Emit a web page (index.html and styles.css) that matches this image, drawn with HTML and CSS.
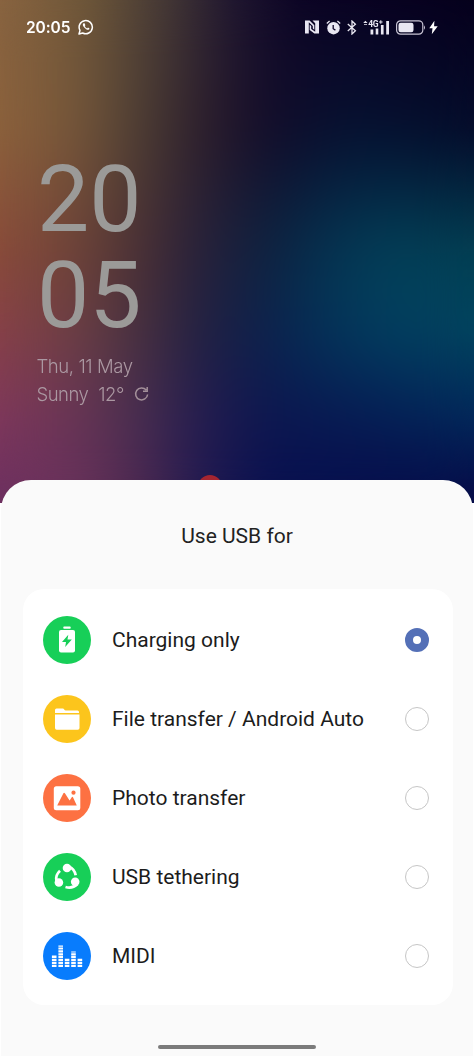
FILE: index.html
```
<!DOCTYPE html>
<html lang="en">
<head>
<meta charset="utf-8">
<title>Use USB for</title>
<link rel="stylesheet" href="styles.css">
</head>
<body>
<div class="screen">
  <div class="wallpaper">
    <div class="band band-1"></div>
    <div class="band band-2"></div>
    <div class="band band-3"></div>
    <div class="band band-4"></div>
    <div class="band band-5"></div>
    <div class="band band-6"></div>
    <div class="lock">
      <header class="status">
        <div class="status-left">
          <span class="time">20:05</span>
          <svg class="whatsapp" width="16" height="16" viewBox="0 0 16 16" fill="none" stroke="#fff" stroke-width="1.5"><path d="M1 15l1-3.6A6.6 6.6 0 1 1 4.700 14z" stroke-linejoin="round"/><path d="M5.300 4.500c-1 1-.4 2.600 1.200 4.300s3.400 2.700 4.700 1.500c.5-.5.4-.8-.1-1.100l-1.100-.6-.9.8c-1.100-.4-1.900-1.200-2.400-2.300l.7-.8-.7-1.700c-.3-.5-.9-.6-1.400-.1z" fill="#fff" stroke="none"/></svg>
        </div>
        <div class="status-right">
          <svg class="nfc" width="14" height="14" viewBox="0 0 14 14" fill="#e9e7f2"><path d="M0 .5h4.600L9.300 5.200V9.800L7.800 8.600V6L3.800 2.300V13.500H0z"/><path d="M14 13.500H9.400L4.700 10V4.800L6.200 6V9L10.200 11.700V3.200L7.500.5H14z"/></svg>
          <svg class="alarm" width="15" height="15" viewBox="0 0 15 15"><circle cx="7.500" cy="8.200" r="6.200" fill="#e9e7f2"/><path d="M.8 3.500L3.600 1M14.200 3.500L11.400 1" stroke="#e9e7f2" stroke-width="1.300"/><path d="M7.200 5v3.700l2.200 1.400" stroke="#0d0527" stroke-width="1.300" fill="none"/></svg>
          <svg class="bt" width="10" height="15" viewBox="0 0 10 15" fill="none" stroke="#e9e7f2" stroke-width="1.300"><path d="M.8 4l7.600 6.800L5 14V1l3.400 3.200L.8 11"/></svg>
          <svg class="signal" width="27" height="15" viewBox="0 0 27 15" fill="#e9e7f2"><path d="M.2 3L2.400.8 4.600 3zM1 4.200h3v.8H1z"/><text x="5.300" y="7.300" class="network">4G</text><path d="M17.300.2h1v1.300h1.300v1h-1.300v1.300h-1V2.500H16v-1h1.300zM7.500 9.500h2.800v5H7.500zM12.700 8.500h2.600v6h-2.600zM17.900 5h2.700v9.500h-2.700zM23.200 1h2.800v13.500h-2.800z"/></svg>
          <svg class="battery" width="30" height="15" viewBox="0 0 30 15"><rect x=".6" y=".8" width="26.200" height="13.400" rx="4" fill="none" stroke="#c8c4d4" stroke-width="1.200"/><rect x="2.500" y="2.700" width="15" height="9.600" rx="2.200" fill="#e9e7f2"/><path d="M28 5.200q2 2.300 0 4.600z" fill="#c8c4d4"/></svg>
          <svg class="bolt" width="9" height="15" viewBox="0 0 9 15"><path d="M5.400.8L.3 8.300h3.200L2.800 14.200 8.700 6.200H5.100z" fill="#fff"/></svg>
        </div>
      </header>
      <div class="clock"><div>20</div><div>05</div></div>
      <div class="date">Thu, 11 May</div>
      <div class="weather"><span>Sunny</span><span>12°</span><svg width="15" height="16" viewBox="0 0 15 16" fill="none" stroke="#a28f99" stroke-width="1.500"><path d="M12.200 4A6 6 0 1 0 13.600 8.500M13.200 1v4.300H9"/></svg></div>
    </div>
    <div class="fingerprint"></div>
  </div>
  <main class="sheet">
    <h1 class="title">Use USB for</h1>
    <div class="card">
      <label class="option">
        <svg class="icon" viewBox="0 0 48 48"><circle cx="24" cy="24" r="24" fill="#17cf58"/><rect x="20.300" y="10.500" width="7.400" height="2.200" rx=".8" fill="#fff"/><rect x="16" y="14" width="16" height="22.500" rx="2" fill="#fff"/><path d="M25.300 18.800L19 26.100h4l-.8 5L28.800 23.600H24.500z" fill="#17cf58"/></svg>
        <span class="name">Charging only</span><span class="radio checked"></span>
      </label>
      <label class="option">
        <svg class="icon" viewBox="0 0 48 48"><circle cx="24" cy="24" r="24" fill="#fcc51c"/><path d="M12 18v-3a1.500 1.500 0 0 1 1.500-1.500h6.300c1.300 0 1.500 2 3 2h11.700a1.500 1.500 0 0 1 1.500 1.500v1zM12 19.600h24.500V33a1.700 1.700 0 0 1-1.700 1.700H13.700A1.700 1.700 0 0 1 12 33z" fill="#fff"/></svg>
        <span class="name">File transfer / Android Auto</span><span class="radio"></span>
      </label>
      <label class="option">
        <svg class="icon" viewBox="0 0 48 48"><circle cx="24" cy="24" r="24" fill="#fd7142"/><rect x="10.800" y="12.300" width="26.500" height="24" rx="2.500" fill="#fff"/><path d="M14.200 31.500l6.200-12.200q.7-1.300 1.500 0l4.700 7.200 2-3.100q.8-1.200 1.500 0l3.700 8.100z" fill="#fd7142"/><circle cx="30.500" cy="18.700" r="2.100" fill="#fd7142"/></svg>
        <span class="name">Photo transfer</span><span class="radio"></span>
      </label>
      <label class="option">
        <svg class="icon" viewBox="0 0 48 48"><circle cx="24" cy="24" r="24" fill="#17cf58"/><g fill="#fff"><circle cx="24" cy="15" r="4.300"/><circle cx="15.900" cy="29.500" r="4.300"/><circle cx="32.200" cy="28.800" r="4.300"/></g><path d="M26 13.500Q31.500 16 32.700 22.300M13.500 28Q12 22.500 17 17.800M34.500 31Q29.500 36 22.500 34" fill="none" stroke="#fff" stroke-width="2.700"/></svg>
        <span class="name">USB tethering</span><span class="radio"></span>
      </label>
      <label class="option">
        <svg class="icon" viewBox="0 0 48 48"><circle cx="24" cy="24" r="24" fill="#087cfd"/><g stroke="#fff" stroke-width="4.600" stroke-dasharray="2.200 .7"><path d="M11.200 35V23M17.700 35V13.500M24.100 35V26M30.500 35V19.500M36.900 35V26"/></g></svg>
        <span class="name">MIDI</span><span class="radio"></span>
      </label>
    </div>
    <div class="handle"></div>
  </main>
</div>
</body>
</html>
```
FILE: styles.css
```
* { box-sizing: border-box; }
body { margin: 0; background: #fff; font-family: Roboto, "Liberation Sans", sans-serif; }
.screen { width: 474px; height: 1058px; overflow: hidden; }
.wallpaper { display: grid; height: 503px; position: relative; }
.band, .lock { grid-area: 1 / 1; min-width: 0; }
.band-1 { background: linear-gradient(90deg, #8a6541 0, #6c5639 90px, #453936 165px, #1f1630 235px, #0c0424 300px, #06001c); }
.band-2 { background: linear-gradient(90deg, #8e623c 0, #735539 80px, #4c3d33 140px, #2e1f2c 200px, #120c2a 270px, #061232 350px, #050c2b);
  -webkit-mask: linear-gradient(transparent 0, #000 130px); mask: linear-gradient(transparent 0, #000 130px); }
.band-3 { background: linear-gradient(90deg, #8c4c3a 0, #6b4238 80px, #4a3034 140px, #27203a 200px, #0d2240 270px, #063250 320px, #034058 390px, #033f52);
  -webkit-mask: linear-gradient(transparent 130px, #000 250px); mask: linear-gradient(transparent 130px, #000 250px); }
.band-4 { background: linear-gradient(90deg, #8a4148 0, #693f44 80px, #47303f 140px, #222042 200px, #0b224e 270px, #053258 320px, #023f60 390px, #02455f);
  -webkit-mask: linear-gradient(transparent 250px, #000 330px); mask: linear-gradient(transparent 250px, #000 330px); }
.band-5 { background: linear-gradient(90deg, #80385c 0, #663455 80px, #482e50 140px, #241c50 200px, #0c1650 270px, #061c54 370px, #02285a);
  -webkit-mask: linear-gradient(transparent 330px, #000 420px); mask: linear-gradient(transparent 330px, #000 420px); }
.band-6 { background: linear-gradient(90deg, #6e3060 0, #68325a 80px, #4c2850 140px, #221a50 200px, #081050 270px, #060c48);
  -webkit-mask: linear-gradient(transparent 420px, #000 490px); mask: linear-gradient(transparent 420px, #000 490px); }
.lock { display: flow-root; position: relative; -webkit-backdrop-filter: blur(26px); backdrop-filter: blur(26px); }
.status { display: flex; justify-content: space-between; align-items: center; height: 30px; margin-top: 12px; padding: 0 36px 0 26px; }
.status-left { display: flex; align-items: center; gap: 8px; }
.status-right { display: flex; align-items: center; }
.status svg { display: block; flex: none; }
.time { color: #fff; font: 600 15.500px/30px Inter, sans-serif; letter-spacing: -.1px; padding-top: 1px; }
.alarm { margin-left: 7px; }
.bt { margin-left: 6px; }
.signal { margin-left: 6px; }
.battery { margin-left: 6px; }
.bolt { margin-left: 3px; }
.network { font: 700 8.500px Roboto, sans-serif; letter-spacing: -.4px; }
.clock { margin: 110px 0 0 37px; font-size: 93px; line-height: 96px; color: #9b9a98; }
.date, .weather { margin-left: 36.500px; font: 300 18.5px/28px Inter, sans-serif; letter-spacing: -.4px; color: #ab98a2; }
.date { margin-top: 8px; }
.weather { display: flex; align-items: center; gap: 10px; letter-spacing: -.5px; }
.fingerprint { position: absolute; left: 198px; top: 475px; width: 24px; height: 24px; border-radius: 50%; background: #a52530; }
.sheet { position: relative; display: flex; flex-direction: column; height: 576px; margin: -23px 1px 0; padding: 0 20px 0 22px; border-radius: 30px 30px 0 0; background: #fafafa; }
.title { margin: 42px 2px 38px 0; text-align: center; font-weight: 400; font-size: 21px; line-height: 29px; color: #222; }
.card { padding: 11px 24px 10px 20px; border-radius: 21px; background: #fff; }
.option { display: flex; align-items: center; height: 79px; }
.icon { width: 48px; height: 48px; flex: none; }
.name { flex: 1; margin-left: 21px; font-size: 21px; line-height: 25px; padding-top: 1px; color: #1c1c1c; white-space: nowrap; }
.radio { width: 24px; height: 24px; border: 1.500px solid #c6c6c6; border-radius: 50%; }
.radio.checked { border: 8px solid #5470b7; background: #fff; }
.handle { width: 158px; height: 4px; margin: 40px 0 0 135px; border-radius: 2px; background: #7b7b7b; }
```
